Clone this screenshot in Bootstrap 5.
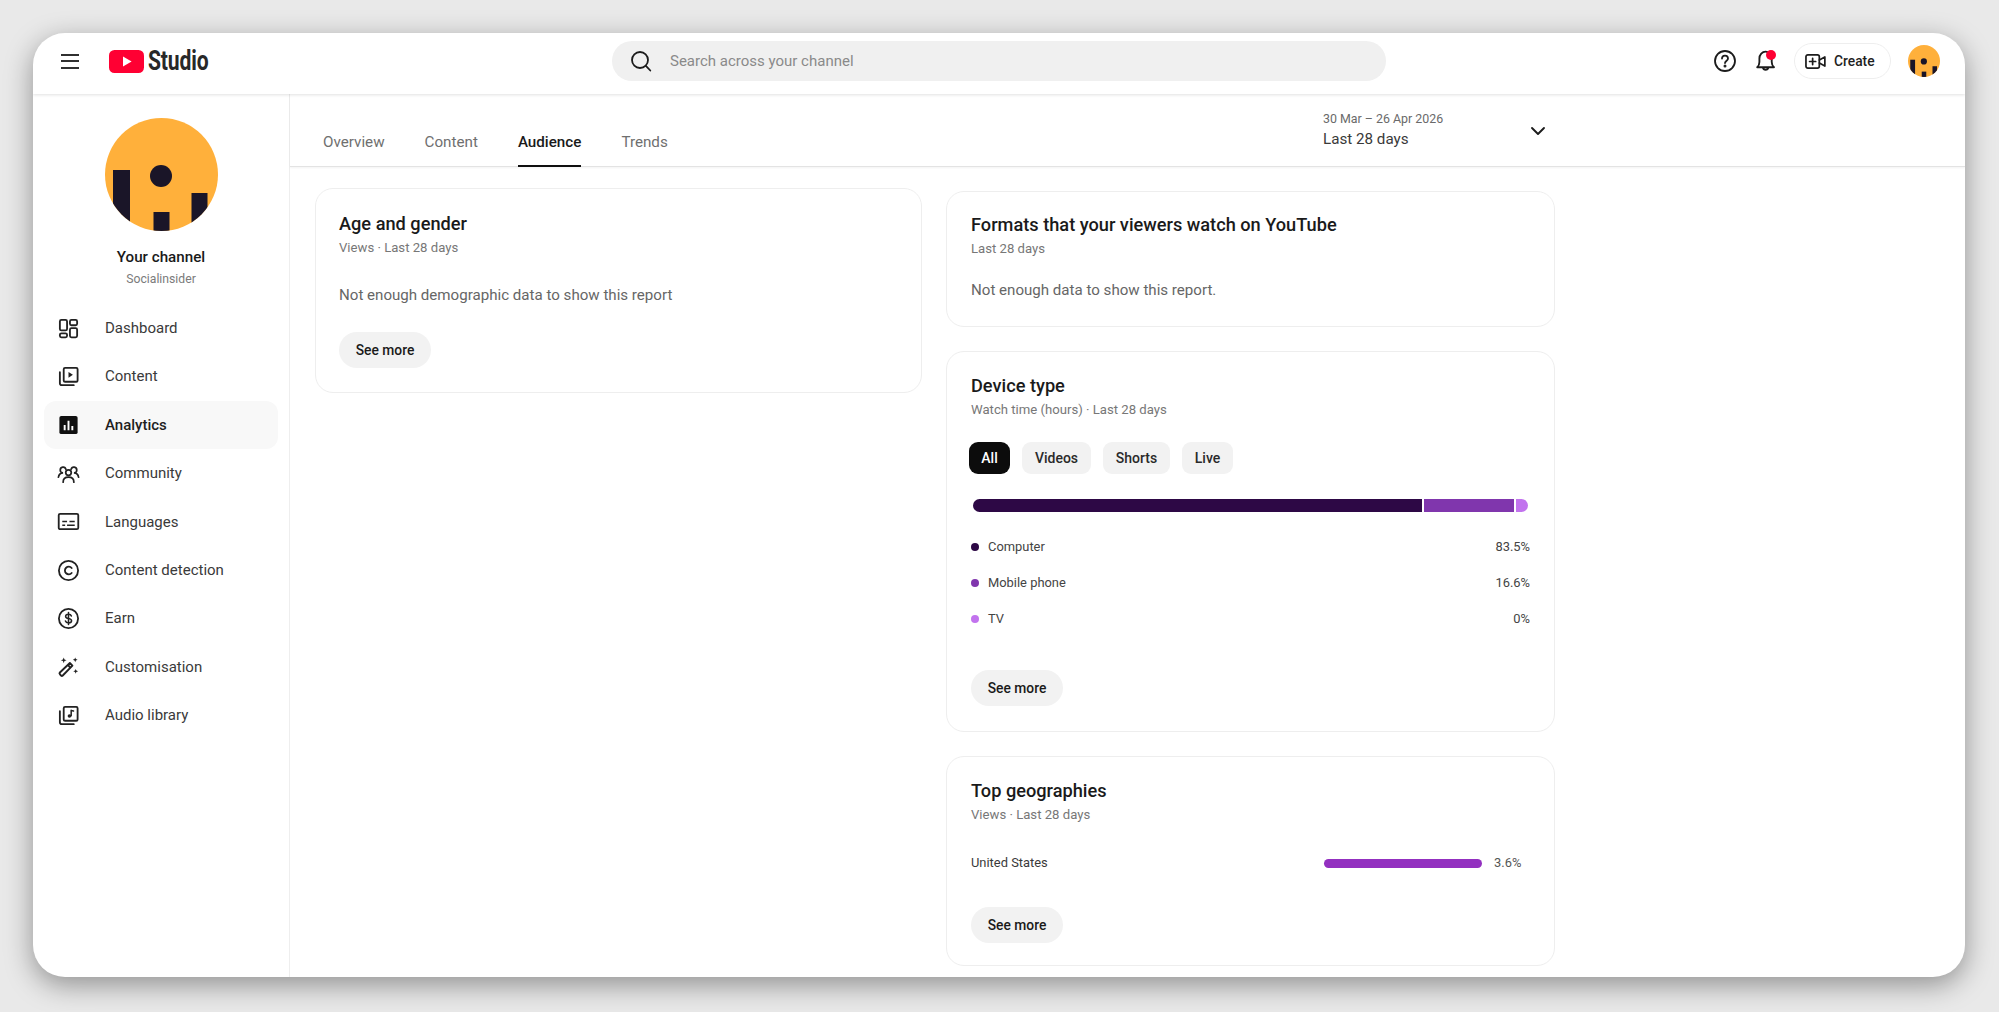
<!DOCTYPE html>
<html lang="en">
<head>
<meta charset="utf-8">
<title>YouTube Studio</title>
<link href="https://cdn.jsdelivr.net/npm/bootstrap@5.3.0/dist/css/bootstrap.min.css" rel="stylesheet">
<style>
html,body{height:100%}
body{background:#e9e9e9;font-family:Roboto,"Liberation Sans",sans-serif;overflow:hidden;padding:33px 34px 35px 33px;color:#0f0f0f}
.studio-window{height:944px;border-radius:32px;background:#fff;overflow:hidden;box-shadow:0 8px 28px rgba(0,0,0,.38)}
.top-bar{height:61px;flex:none;padding:0 25px 5px 28px;box-shadow:0 1px 3px rgba(0,0,0,.12);position:relative;z-index:2}
.menu-lines{width:18px;height:15px;flex:none;border-top:2px solid #303030;border-bottom:2px solid #303030;position:relative;background:linear-gradient(#303030,#303030) center/100% 2px no-repeat}
.brand-mark{margin-left:30px;width:35px;height:23px;flex:none}
.brand-word{font-weight:700;font-size:28.5px;line-height:1;color:#282828;transform:scaleX(.74);transform-origin:left center;width:50px;margin-left:4px;flex:none;letter-spacing:-.2px}
.search-pill{margin-left:414px;width:774px;height:40px;background:#f0f0f0;border-radius:20px;padding-left:18px;font-size:15px;color:#8a8a8a;gap:18px;flex:none}
.bar-icon{width:22px;height:22px;flex:none;display:block}
.bell-wrap{position:relative;margin-left:19px;width:22px;height:22px}
.bell-dot{position:absolute;left:11px;top:0;width:10px;height:10px;border-radius:50%;background:#ff0033}
.create-btn{margin-left:17px;width:97px;height:36px;border:1px solid #eee;border-radius:18px;padding-left:10px;gap:8px;font-size:13.8px;font-weight:500;color:#1f1f1f;flex:none}
.create-btn svg{width:21px;height:21px}
.small-avatar{margin-left:17px;width:32px;height:32px;flex:none;display:block}
.side-col{width:257px;flex:none;border-right:1px solid #eee;padding-top:24px}
.big-avatar{width:113px;height:113px;display:block;margin-left:72px}
.channel-name{font-size:15.2px;font-weight:500;line-height:20px;margin-top:16px;color:#1a1a1a;text-align:center}
.channel-org{font-size:12.2px;line-height:18px;margin-top:3px;color:#7b7b7b;text-align:center}
.side-list{margin-top:16px;padding:0}
.side-item{height:48.4px;margin:0 11px;padding-left:14px;gap:25px;border-radius:12px;font-size:15px;color:#3a3a3a;text-decoration:none}
.side-item svg{width:23px;height:23px;flex:none;margin-left:-1px}
.side-item.is-on{background:#f8f8f8;color:#1f1f1f;font-weight:500}
.main-col{min-width:0}
.tab-strip{height:72px;flex:none;width:1265px;padding:0 10px 0 33px}
.tab-rule{border-bottom:1px solid #e3e3e3;box-shadow:0 1px 2px rgba(0,0,0,.05)}
.tab-set{gap:40px;align-self:flex-end}
.tab-set .nav-link{padding:0;height:41px;line-height:20px;padding-top:6px;font-size:15.2px;color:#6f6f6f;font-weight:400;border-bottom:2px solid transparent;margin-bottom:-1px}
.tab-set .nav-link.is-on{color:#1a1a1a;font-weight:500;border-bottom-color:#0f0f0f}
.date-pick{width:222px;padding-top:16px;align-self:flex-start}
.date-range{font-size:12.4px;line-height:18px;color:#6a6a6a}
.date-label{font-size:15.2px;line-height:22px;color:#3a3a3a}
.date-chev{width:16px;height:16px;margin-top:13px;margin-right:-1px}
.board{padding-left:25px;gap:24px}
.col-one{width:607px;flex:none;padding-top:21px}
.col-two{width:609px;flex:none;padding-top:24px;gap:24px}
.rep-card{border:1px solid #eee;border-radius:18px;background:#fff;padding:22px 23px 24px 24px}
.col-one .rep-card{padding:23px 23px 24px 23px}
.rep-title{font-size:18.2px;line-height:24px;font-weight:500;color:#1a1a1a;margin:0}
.rep-sub{font-size:13.15px;line-height:18px;color:#777;margin:3px 0 0}
.rep-note{font-size:15.1px;line-height:20px;color:#666;margin:28px 0 0}
.note-tight{margin-top:22px}
.more-btn{display:flex;align-items:center;justify-content:center;width:92px;height:36px;border:0;border-radius:18px;background:#f2f2f2;color:#1a1a1a;font-size:13.8px;font-weight:500;margin-top:27px;padding:0}
.gap-a{margin-top:33px}
.gap-b{margin-top:34px}
.card-pad-b{padding-bottom:26px;padding-top:21px}
.card-pad-d{padding-bottom:25px}
.card-pad-c{padding-bottom:22px}
.chip-row{margin-top:23px;gap:12px;margin-left:-2px}
.chip-item{height:32px;border-radius:9px;background:#f2f2f2;color:#2a2a2a;font-size:14px;font-weight:500;border:0;padding:0}
.chip-all{width:41px;background:#0c0c0c;color:#fff;border-radius:9px}
.chip-vid{width:69px}
.chip-sho{width:67px}
.chip-liv{width:51px}
.stack-bar{height:13px;margin:25px 3px 0 2px;gap:2px;border-radius:6.5px;overflow:hidden}
.seg-a{background:#2d0845}
.seg-b{background:#8036ad}
.seg-c{background:#c273ee}
.legend-box{margin-top:17px;padding-right:1px}
.legend-row{height:36px;font-size:12.9px;color:#444}
.legend-dot{width:8px;height:8px;border-radius:50%;margin-right:9px;flex:none}
.geo-row{height:20px;margin-top:29px;font-size:12.9px;color:#3a3a3a}
.geo-track{width:158px;height:9px;border-radius:5px;background:#9330c0;margin-left:auto;flex:none}
.geo-val{width:37px;margin-left:12px;flex:none;color:#555}
</style>
</head>
<body>
<div class="studio-window d-flex flex-column">
  <header class="top-bar d-flex align-items-center">
    <span class="menu-lines"></span>
    <svg class="brand-mark" viewBox="0 0 35 23" aria-hidden="true"><rect width="35" height="23" rx="5.5" fill="#ff0033"/><path d="M14 6.6v9.8l8.6-4.9z" fill="#fff"/></svg>
    <span class="brand-word">Studio</span>
    <div class="search-pill d-flex align-items-center">
      <svg class="bar-icon" viewBox="0 0 22 22" fill="none" stroke="#1c1c1c" stroke-width="1.8" stroke-linecap="round" aria-hidden="true"><circle cx="10" cy="10" r="8"/><path d="M15.9 15.9l4.4 4.6"/></svg>
      <span>Search across your channel</span>
    </div>
    <svg class="bar-icon ms-auto" viewBox="0 0 22 22" fill="none" stroke="#1c1c1c" stroke-width="1.8" stroke-linecap="round" aria-hidden="true"><circle cx="11" cy="11" r="10"/><path d="M8 8.6a3 3 0 0 1 6 .1c0 1.9-3 2.2-3 4.4"/><circle cx="11" cy="16" r=".6" fill="#1c1c1c"/></svg>
    <div class="bell-wrap">
      <svg class="bar-icon" viewBox="1 1.500 20 20" fill="none" stroke="#1c1c1c" stroke-width="1.7" stroke-linejoin="round" aria-hidden="true"><path d="M3 17.200c1.600-1.200 2-2.600 2-4.700V9.200C5 5.600 7.600 3 10.600 3s5.600 2.600 5.600 6.200v3.300c0 2.100.5 3.500 2.100 4.700z"/><path d="M8.200 17.400a2.500 2.500 0 0 0 4.900 0"/></svg>
      <span class="bell-dot"></span>
    </div>
    <div class="create-btn d-flex align-items-center">
      <svg viewBox="0 0 22 22" fill="none" stroke="#1c1c1c" stroke-width="1.8" stroke-linejoin="round" stroke-linecap="round" aria-hidden="true"><rect x="1" y="4" width="14" height="14" rx="2"/><path d="M15 9.400l5.800-3.200v9.600L15 12.600"/><path d="M8 7.800v6.400M4.800 11h6.400"/></svg>
      <span>Create</span>
    </div>
    <svg class="small-avatar" viewBox="0 0 113 113" aria-hidden="true"><defs><clipPath id="clipSm"><circle cx="56.5" cy="56.5" r="56.5"/></clipPath></defs><g clip-path="url(#clipSm)"><rect width="113" height="113" fill="#ffb03b"/><rect x="8" y="52" width="17" height="61" fill="#1a1528"/><rect x="48.5" y="94" width="16" height="19" fill="#1a1528"/><rect x="86.5" y="75" width="16" height="38" fill="#1a1528"/><circle cx="56" cy="58" r="11" fill="#1a1528"/></g></svg>
  </header>

  <div class="d-flex flex-grow-1 overflow-hidden">
    <aside class="side-col">
      <svg class="big-avatar" viewBox="0 0 113 113" aria-hidden="true"><defs><clipPath id="clipLg"><circle cx="56.5" cy="56.5" r="56.5"/></clipPath></defs><g clip-path="url(#clipLg)"><rect width="113" height="113" fill="#ffb03b"/><rect x="8" y="52" width="17" height="61" fill="#1a1528"/><rect x="48.5" y="94" width="16" height="19" fill="#1a1528"/><rect x="86.5" y="75" width="16" height="38" fill="#1a1528"/><circle cx="56" cy="58" r="11" fill="#1a1528"/></g></svg>
      <div class="channel-name">Your channel</div>
      <div class="channel-org">Socialinsider</div>
      <nav class="side-list d-flex flex-column">
        <a class="side-item d-flex align-items-center" href="#"><svg viewBox="0 0 24 24" fill="none" stroke="#222" stroke-width="1.9" aria-hidden="true"><rect x="3" y="3" width="7.5" height="11" rx="1.6"/><rect x="13.500" y="3" width="7.5" height="5.600" rx="1.6"/><rect x="3" y="17" width="7.5" height="4.200" rx="1.6"/><rect x="13.500" y="11.600" width="7.5" height="9.600" rx="1.6"/></svg><span>Dashboard</span></a>
        <a class="side-item d-flex align-items-center" href="#"><svg viewBox="0 0 24 24" fill="none" stroke="#222" stroke-width="1.9" stroke-linecap="round" aria-hidden="true"><rect x="7" y="3" width="14.500" height="14.500" rx="1.400"/><path d="M3 7.500V19a2 2 0 0 0 2 2h12.500"/><path d="M12 7.400v5.800l4.600-2.900z" fill="#222" stroke="none"/></svg><span>Content</span></a>
        <a class="side-item is-on d-flex align-items-center" href="#"><svg viewBox="0 0 24 24" aria-hidden="true"><rect x="2.500" y="3" width="19" height="19" rx="2" fill="#111"/><path d="M7 12.500h2V18H7zM11 8h2v10h-2zM15 13.500h2V18h-2z" fill="#fff"/></svg><span>Analytics</span></a>
        <a class="side-item d-flex align-items-center" href="#"><svg viewBox="0 0 24 24" fill="none" stroke="#222" stroke-width="1.8" stroke-linecap="round" aria-hidden="true"><circle cx="12" cy="11" r="2.900"/><path d="M6.400 21c0-3.400 2.500-5.200 5.600-5.200s5.600 1.800 5.600 5.200"/><path d="M9.300 7.700a3 3 0 1 0-3 3.700c-2.600.3-4.500 2-4.800 4.500"/><path d="M14.700 7.700a3 3 0 1 1 3 3.700c2.600.3 4.500 2 4.800 4.500"/></svg><span>Community</span></a>
        <a class="side-item d-flex align-items-center" href="#"><svg viewBox="0 0 24 24" fill="none" stroke="#222" stroke-width="1.9" aria-hidden="true"><rect x="1.800" y="4" width="20.400" height="16" rx="1.500"/><path d="M5.500 12h5M13 12h5.500M5.500 15.800h3M10.500 15.800h8" stroke-width="1.600"/></svg><span>Languages</span></a>
        <a class="side-item d-flex align-items-center" href="#"><svg viewBox="0 0 24 24" fill="none" stroke="#222" stroke-width="1.9" stroke-linecap="round" aria-hidden="true"><circle cx="12" cy="12" r="10"/><path d="M15.300 9.400a4 4 0 1 0 0 5.200"/></svg><span>Content detection</span></a>
        <a class="side-item d-flex align-items-center" href="#"><svg viewBox="0 0 24 24" fill="none" stroke="#222" stroke-width="1.9" stroke-linecap="round" aria-hidden="true"><circle cx="12" cy="12" r="10"/><path d="M15 9.300c-.4-1.200-1.500-1.800-3-1.800-1.700 0-3 .9-3 2.300 0 3.100 6.200 1.400 6.200 4.500 0 1.400-1.400 2.300-3.200 2.300-1.600 0-2.800-.7-3.200-2M12 5.800v12.400" stroke-width="1.600"/></svg><span>Earn</span></a>
        <a class="side-item d-flex align-items-center" href="#"><svg viewBox="0 0 24 24" fill="none" stroke="#222" stroke-width="2" stroke-linejoin="round" aria-hidden="true"><path d="M3 18.200L13.400 8.400l2.700 2.700L6 21.400a1.300 1.300 0 0 1-1.800 0L3 20a1.300 1.300 0 0 1 0-1.800z"/><path d="M11.300 10.400l2.700 2.900"/><path d="M7 2.500l.8 2.200L10 5.500l-2.200.8L7 8.500l-.8-2.200L4 5.500l2.200-.8zM19 2.500l.7 1.800 1.800.7-1.800.7L19 7.500l-.7-1.800-1.800-.7 1.800-.7zM19.500 14.500l.7 1.800 1.800.7-1.800.7-.7 1.800-.7-1.800-1.800-.7 1.800-.7z" fill="#222" stroke="none"/></svg><span>Customisation</span></a>
        <a class="side-item d-flex align-items-center" href="#"><svg viewBox="0 0 24 24" fill="none" stroke="#222" stroke-width="1.9" stroke-linecap="round" aria-hidden="true"><rect x="7" y="3" width="14.500" height="14.500" rx="1.400"/><path d="M3 7.500V19a2 2 0 0 0 2 2h12.500"/><path d="M14.800 6.500v5.800M14.800 6.800l2.400.6" stroke-width="1.600"/><circle cx="13" cy="12.500" r="1.900" fill="#222" stroke="none"/></svg><span>Audio library</span></a>
      </nav>
    </aside>

    <main class="main-col flex-grow-1 d-flex flex-column">
      <div class="tab-rule flex-none">
        <div class="tab-strip d-flex justify-content-between">
          <ul class="nav tab-set">
            <li class="nav-item"><a class="nav-link" href="#">Overview</a></li>
            <li class="nav-item"><a class="nav-link" href="#">Content</a></li>
            <li class="nav-item"><a class="nav-link is-on" href="#">Audience</a></li>
            <li class="nav-item"><a class="nav-link" href="#">Trends</a></li>
          </ul>
          <div class="date-pick d-flex justify-content-between">
            <div>
              <div class="date-range">30 Mar – 26 Apr 2026</div>
              <div class="date-label">Last 28 days</div>
            </div>
            <svg class="date-chev" viewBox="0 0 16 16" fill="none" stroke="#1c1c1c" stroke-width="1.900" stroke-linecap="round" stroke-linejoin="round" aria-hidden="true"><path d="M2 5l6 6 6-6"/></svg>
          </div>
        </div>
      </div>

      <div class="board d-flex align-items-start">
        <div class="col-one">
          <section class="rep-card">
            <h2 class="rep-title">Age and gender</h2>
            <p class="rep-sub">Views · Last 28 days</p>
            <p class="rep-note">Not enough demographic data to show this report</p>
            <button class="more-btn" type="button">See more</button>
          </section>
        </div>
        <div class="col-two d-flex flex-column">
          <section class="rep-card card-pad-b">
            <h2 class="rep-title">Formats that your viewers watch on YouTube</h2>
            <p class="rep-sub">Last 28 days</p>
            <p class="rep-note note-tight">Not enough data to show this report.</p>
          </section>
          <section class="rep-card card-pad-d">
            <h2 class="rep-title">Device type</h2>
            <p class="rep-sub">Watch time (hours) · Last 28 days</p>
            <div class="chip-row d-flex">
              <button class="chip-item chip-all" type="button">All</button>
              <button class="chip-item chip-vid" type="button">Videos</button>
              <button class="chip-item chip-sho" type="button">Shorts</button>
              <button class="chip-item chip-liv" type="button">Live</button>
            </div>
            <div class="stack-bar d-flex">
              <div class="seg-a" style="width:449px"></div>
              <div class="seg-b" style="width:90px"></div>
              <div class="seg-c" style="width:12px"></div>
            </div>
            <div class="legend-box">
              <div class="legend-row d-flex align-items-center"><span class="legend-dot seg-a"></span><span>Computer</span><span class="ms-auto">83.5%</span></div>
              <div class="legend-row d-flex align-items-center"><span class="legend-dot seg-b"></span><span>Mobile phone</span><span class="ms-auto">16.6%</span></div>
              <div class="legend-row d-flex align-items-center"><span class="legend-dot seg-c"></span><span>TV</span><span class="ms-auto">0%</span></div>
            </div>
            <button class="more-btn gap-a" type="button">See more</button>
          </section>
          <section class="rep-card card-pad-c">
            <h2 class="rep-title">Top geographies</h2>
            <p class="rep-sub">Views · Last 28 days</p>
            <div class="geo-row d-flex align-items-center"><span>United States</span><span class="geo-track"></span><span class="geo-val">3.6%</span></div>
            <button class="more-btn gap-b" type="button">See more</button>
          </section>
        </div>
      </div>
    </main>
  </div>
</div>
<script src="https://cdn.jsdelivr.net/npm/bootstrap@5.3.0/dist/js/bootstrap.bundle.min.js"></script>
</body>
</html>
